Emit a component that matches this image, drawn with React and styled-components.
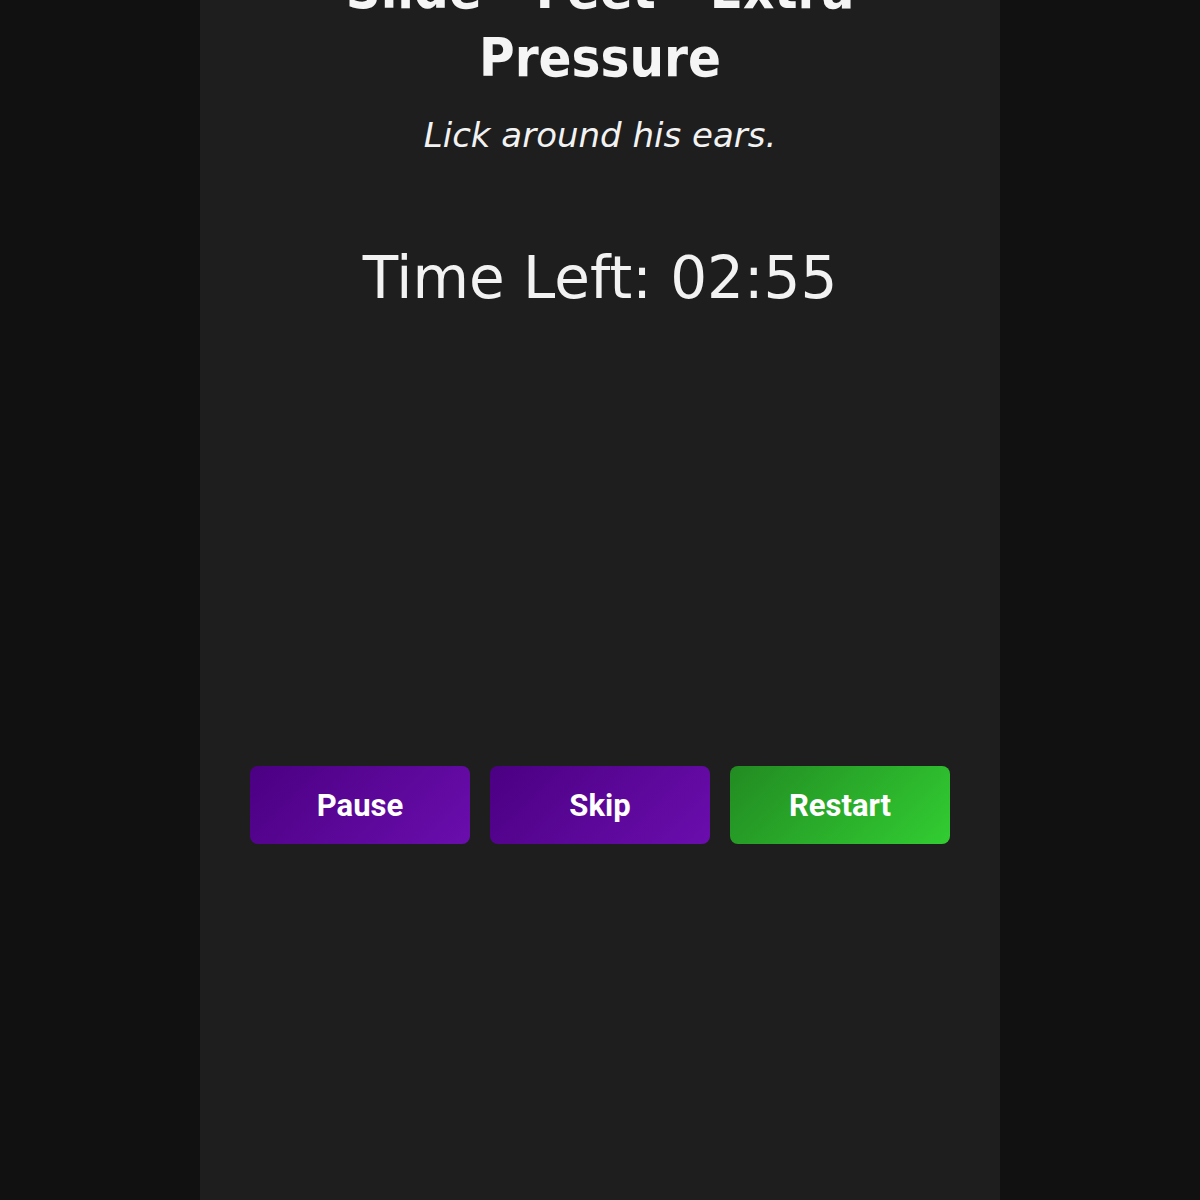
import React from "react";
import styled, { createGlobalStyle } from "styled-components";

const Global = createGlobalStyle`
  html, body { margin: 0; padding: 0; background: #111111; }
  body { font-family: "DejaVu Sans", sans-serif; color: #f2f2f2; }
`;

const Page = styled.div`
  display: flex;
  justify-content: center;
  min-height: 1200px;
  background: #111111;
  overflow: hidden;
`;

const Panel = styled.main`
  width: 800px;
  min-height: 1200px;
  background: #1e1e1e;
  display: flex;
  flex-direction: column;
  align-items: center;
  box-sizing: border-box;
  padding: 0 50px;
`;

const Title = styled.h1`
  margin: -44px 0 0;
  font-family: "DejaVu Sans Condensed", "DejaVu Sans", sans-serif;
  font-stretch: condensed;
  font-weight: 700;
  font-size: 54px;
  line-height: 68px;
  text-align: center;
  color: #f5f5f5;
  width: 560px;
`;

const Subtitle = styled.p`
  margin: 21px 0 0;
  font-family: "DejaVu Sans", sans-serif;
  font-style: italic;
  font-size: 34px;
  line-height: 44px;
  color: #f2f2f2;
`;

const Timer = styled.div`
  margin-top: 81px;
  font-family: "DejaVu Sans", sans-serif;
  font-size: 58px;
  line-height: 80px;
  color: #f2f2f2;
`;

const Buttons = styled.div`
  margin-top: 448px;
  display: grid;
  grid-template-columns: repeat(3, 220px);
  gap: 20px;
`;

const Button = styled.button`
  height: 78px;
  border: none;
  border-radius: 8px;
  color: #ffffff;
  font-family: Roboto, "Liberation Sans", sans-serif;
  font-weight: 700;
  font-size: 31px;
  cursor: pointer;
  background: ${(p) =>
    p.$variant === "green"
      ? "linear-gradient(135deg, #228b22, #32cd32)"
      : "linear-gradient(135deg, #4b0082, #6a0dad)"};
`;

export default function App() {
  return (
    <>
      <Global />
      <Page>
        <Panel>
          <Title>Slide - Feet - Extra Pressure</Title>
          <Subtitle>Lick around his ears.</Subtitle>
          <Timer>Time Left: 02:55</Timer>
          <Buttons>
            <Button>Pause</Button>
            <Button>Skip</Button>
            <Button $variant="green">Restart</Button>
          </Buttons>
        </Panel>
      </Page>
    </>
  );
}
